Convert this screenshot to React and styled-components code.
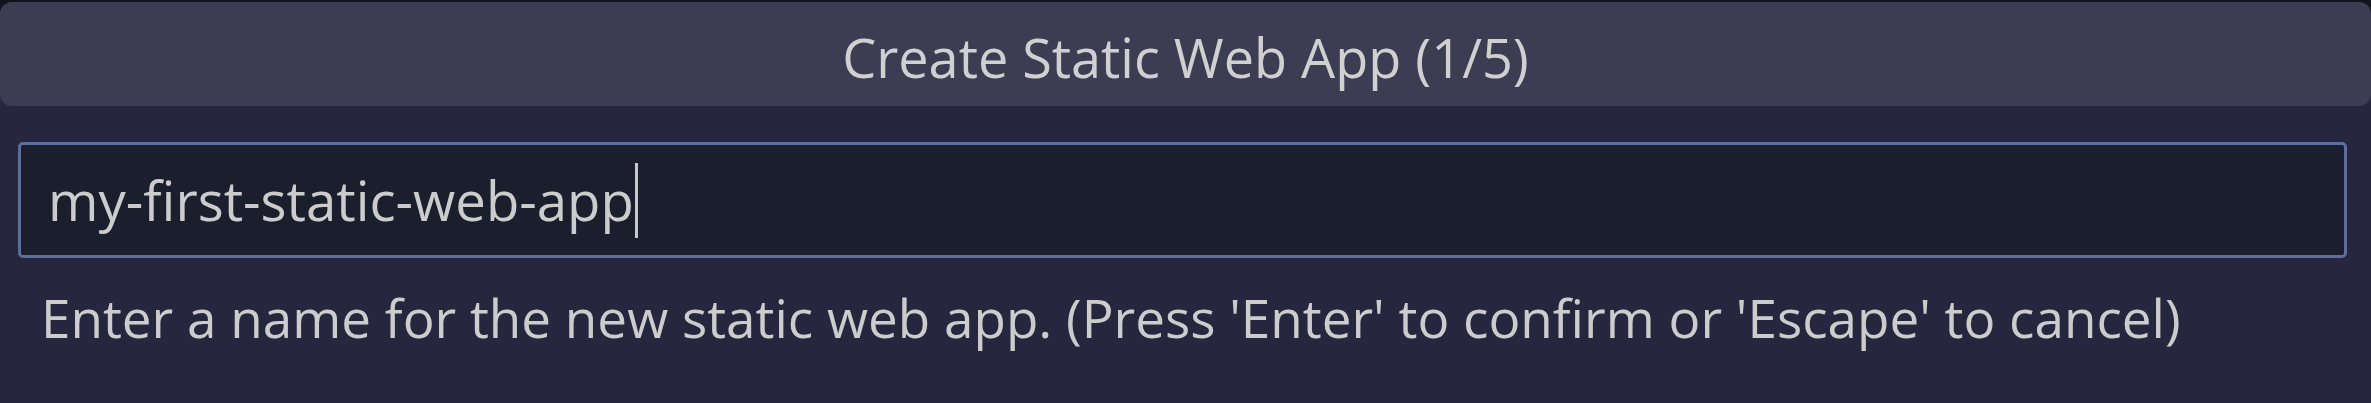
import React from 'react';
import styled, { createGlobalStyle } from 'styled-components';

const GlobalStyle = createGlobalStyle`
  html, body {
    margin: 0;
    padding: 0;
    background: #11141f;
    height: 403px;
    overflow: hidden;
  }
  #root {
    height: 100%;
  }
`

const QuickInputStyled = styled.div`
  margin-top: 2px;
  height: 401px;
  background: #26263e;
  border-radius: 12px 12px 0 0;
  font-family: "Segoe UI", "Open Sans", sans-serif;
  color: #cccccc;
  display: flex;
  flex-direction: column;
`
const TitleBarStyled = styled.div`
  height: 104px;
  box-sizing: border-box;
  padding-top: 6px;
  background: #3c3d52;
  border-radius: 12px;
  display: flex;
  align-items: center;
  justify-content: center;
  font-size: 54px;
  color: #d0d0d0;
`
const BodyStyled = styled.div`
  padding: 36px 24px 0 18px;
`
const TextFieldStyled = styled.div`
  height: 110px;
  box-sizing: content-box;
  border: 3px solid #5e6e9a;
  border-radius: 5px;
  background: #1b1f2d;
  padding-left: 27px;
  display: flex;
  align-items: center;
  font-size: 54.5px;
`
const ValueStyled = styled.span`
  white-space: pre;
`
const CaretStyled = styled.span`
  width: 3px;
  height: 75px;
  margin-left: 1px;
  background: #c8c8c8;
`
const MessageStyled = styled.div`
  padding: 29px 0 0 23px;
  font-size: 53px;
  line-height: 62px;
`

const App = () => {
  return (
    <>
      <GlobalStyle />
      <QuickInputStyled>
        <TitleBarStyled>Create Static Web App (1/5)</TitleBarStyled>
        <BodyStyled>
          <TextFieldStyled>
            <ValueStyled>my-first-static-web-app</ValueStyled>
            <CaretStyled />
          </TextFieldStyled>
          <MessageStyled>
            Enter a name for the new static web app. (Press 'Enter' to confirm or 'Escape' to cancel)
          </MessageStyled>
        </BodyStyled>
      </QuickInputStyled>
    </>
  )
}

export default App
